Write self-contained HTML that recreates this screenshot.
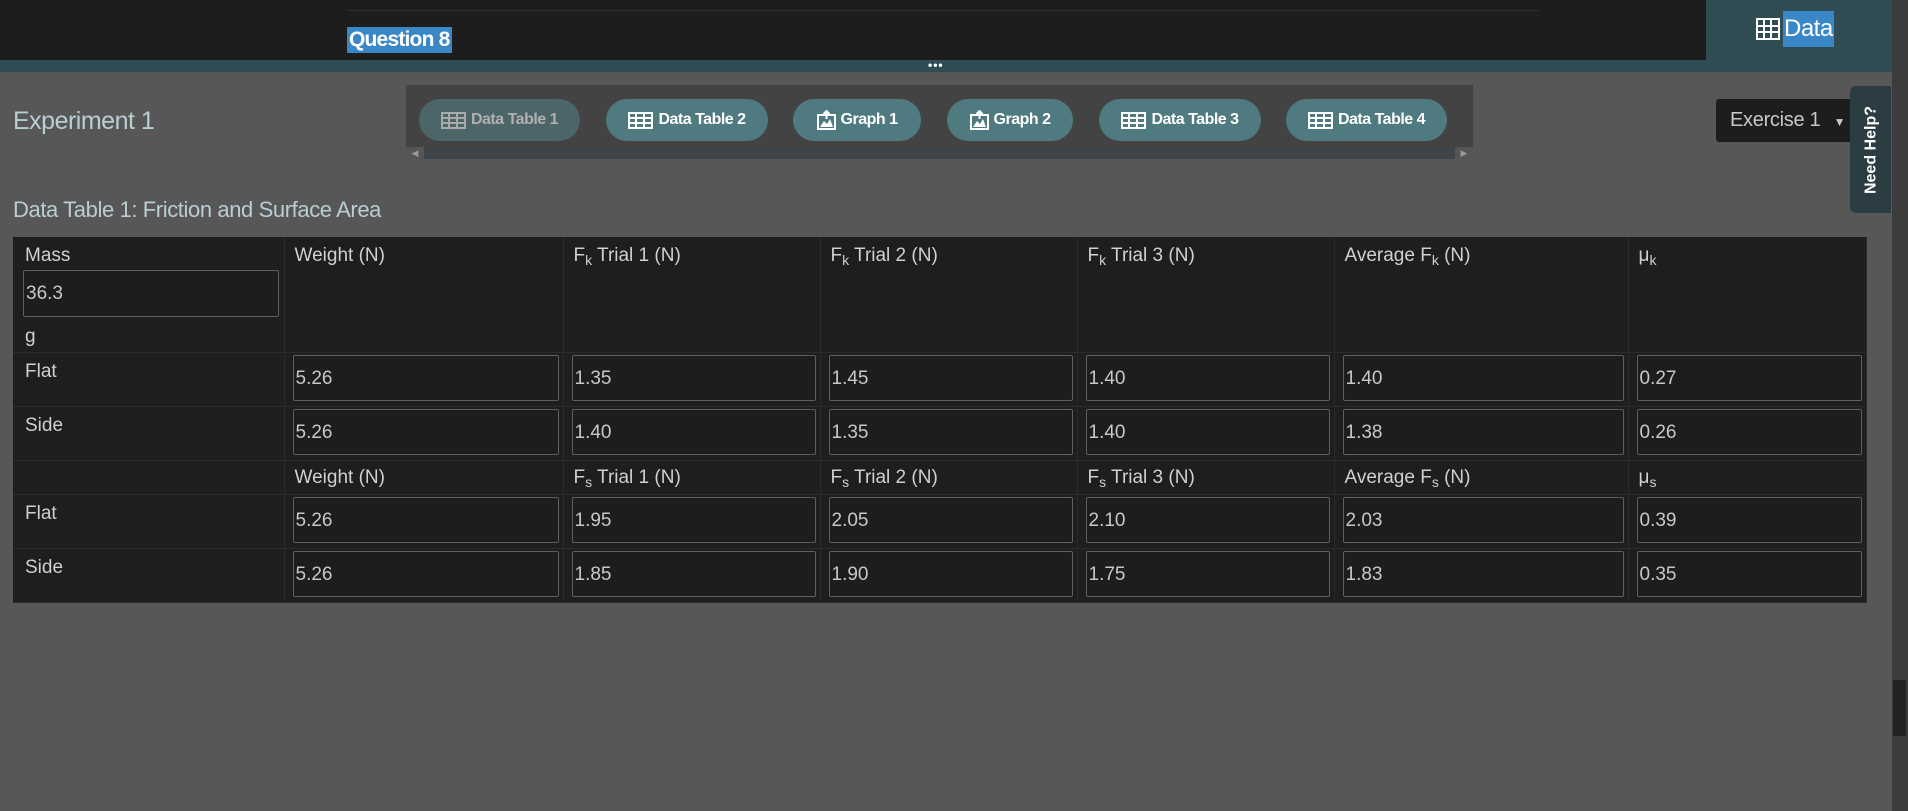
<!DOCTYPE html>
<html><head><meta charset="utf-8"><style>
*{margin:0;padding:0;box-sizing:border-box}
body{width:1908px;height:811px;overflow:hidden;background:#575757;font-family:"Liberation Sans",sans-serif;position:relative}
.abs{position:absolute}
.pill{position:absolute;top:99px;height:42px;border-radius:21px;background:#4e7a80;color:#fff;font-weight:bold;font-size:16px;letter-spacing:-0.5px;display:flex;align-items:center;justify-content:center;gap:5px}
.pill svg{display:block}
table{position:absolute;left:13px;top:237px;width:1853px;border-collapse:collapse;background:#1e1e21;color:#d0d0d0;font-size:19px;table-layout:fixed}
td{vertical-align:top;border-right:1px solid #2a2a2d;border-bottom:1px solid #2c2c2f;padding:8px 10px}
.inp{height:46px;border:1px solid #5e5e5e;border-radius:2px;background:#1d1d1d;color:#c8c8c8;font-size:19px;padding:12px 2px 0;margin-left:0}
td.i{padding:2px 4px 0 8px}
sub{font-size:14px;vertical-align:-4px;line-height:0}
</style></head><body>
<div class="abs" style="left:0;top:0;width:1706px;height:60px;background:#1d1d1d"></div>
<div class="abs" style="left:347px;top:10px;width:1192px;height:1px;background:#2e2e2e"></div>
<div class="abs" style="left:0;top:60px;width:1892px;height:12px;background:#2f4d53"></div>
<div class="abs" style="left:1706px;top:0;width:186px;height:72px;background:#2f4d53"></div>
<div class="abs" style="left:1892px;top:0;width:16px;height:811px;background:#3c3c3c"></div>
<div class="abs" style="left:1893px;top:680px;width:13px;height:56px;background:#222"></div>
<div class="abs" style="left:347px;top:27px;height:26px;background:#3a87c8;color:#fff;font-weight:bold;font-size:21px;letter-spacing:-0.8px;padding:0 2px;line-height:26px">Question 8</div>
<div class="abs" style="left:928px;top:58px;color:#fff;font-size:12px;letter-spacing:1px;font-weight:bold">•••</div>
<div class="abs" style="left:1756px;top:11px;height:36px;display:flex;align-items:center;color:#fff;font-size:24px">
<svg width="24" height="22" viewBox="0 0 24 22" style="margin-right:3px"><rect x="1" y="1" width="22" height="20" fill="none" stroke="#fff" stroke-width="2"/><path d="M1 8H23M1 14H23M8 1V21M15 1V21" stroke="#fff" stroke-width="2"/></svg>
<span style="background:#3a87c8;padding:0 1px;height:36px;line-height:36px;letter-spacing:-0.5px">Data</span></div>

<div class="abs" style="left:13px;top:107px;color:#b9ced2;font-size:25px;letter-spacing:-0.5px">Experiment 1</div>
<div class="abs" style="left:406px;top:85px;width:1067px;height:74px;background:#434343"></div>
<div class="abs" style="left:406px;top:147px;width:1067px;height:12px;background:#3e4447"></div>
<div class="abs" style="left:406px;top:147px;width:18px;height:12px;background:#555;color:#999;font-size:9px;line-height:12px;text-align:center">◀</div>
<div class="abs" style="left:1455px;top:147px;width:18px;height:12px;background:#555;color:#999;font-size:9px;line-height:12px;text-align:center">▶</div>

<div class="pill" style="left:419px;width:161px;background:#4c6569;color:#b0b0b0"><svg width="25" height="17" viewBox="0 0 25 17"><rect x="1" y="1" width="23" height="15" fill="none" stroke="#aaa" stroke-width="2"/><path d="M1 6H24M1 11H24M8 1V16M16 1V16" stroke="#aaa" stroke-width="2"/></svg>Data Table 1</div>
<div class="pill" style="left:606px;width:162px"><svg width="25" height="17" viewBox="0 0 25 17"><rect x="1" y="1" width="23" height="15" fill="none" stroke="#fff" stroke-width="2"/><path d="M1 6H24M1 11H24M8 1V16M16 1V16" stroke="#fff" stroke-width="2"/></svg>Data Table 2</div>
<div class="pill" style="left:793px;width:128px"><svg width="19" height="20" viewBox="0 0 19 20"><rect x="1" y="5" width="17" height="14" fill="none" stroke="#fff" stroke-width="2"/><path d="M3 17L7 11L10 14L13 9L16 17Z" fill="#fff"/><path d="M9.5 1V9M6.5 4L9.5 1L12.5 4" stroke="#fff" stroke-width="2" fill="none"/></svg>Graph 1</div>
<div class="pill" style="left:947px;width:126px"><svg width="19" height="20" viewBox="0 0 19 20"><rect x="1" y="5" width="17" height="14" fill="none" stroke="#fff" stroke-width="2"/><path d="M3 17L7 11L10 14L13 9L16 17Z" fill="#fff"/><path d="M9.5 1V9M6.5 4L9.5 1L12.5 4" stroke="#fff" stroke-width="2" fill="none"/></svg>Graph 2</div>
<div class="pill" style="left:1099px;width:162px"><svg width="25" height="17" viewBox="0 0 25 17"><rect x="1" y="1" width="23" height="15" fill="none" stroke="#fff" stroke-width="2"/><path d="M1 6H24M1 11H24M8 1V16M16 1V16" stroke="#fff" stroke-width="2"/></svg>Data Table 3</div>
<div class="pill" style="left:1286px;width:161px"><svg width="25" height="17" viewBox="0 0 25 17"><rect x="1" y="1" width="23" height="15" fill="none" stroke="#fff" stroke-width="2"/><path d="M1 6H24M1 11H24M8 1V16M16 1V16" stroke="#fff" stroke-width="2"/></svg>Data Table 4</div>

<div class="abs" style="left:1716px;top:99px;width:146px;height:43px;background:#1d1d1f;border-radius:3px;color:#c8c8c8;font-size:20px;line-height:43px;padding-left:14px;letter-spacing:-0.3px">Exercise 1 <span style="font-size:12px;margin-left:8px">▼</span></div>
<div class="abs" style="left:1850px;top:86px;width:41px;height:127px;background:#2b3d42;border-radius:6px 0 0 6px"></div>
<div class="abs" style="left:1808px;top:139px;width:127px;height:22px;transform:rotate(-90deg);color:#fff;font-weight:bold;font-size:16px;text-align:center;line-height:22px">Need Help?</div>

<div class="abs" style="left:13px;top:197px;color:#b9ced2;font-size:22px;letter-spacing:-0.4px">Data Table 1: Friction and Surface Area</div>

<table>
<colgroup><col style="width:271px"><col style="width:279px"><col style="width:257px"><col style="width:257px"><col style="width:257px"><col style="width:294px"><col style="width:238px"></colgroup>
<tr style="height:115px"><td style="padding:8px 12px 0">Mass<div class="inp" style="margin:3px -7px 0 -2px;height:47px">36.3</div><div style="margin-top:9px">g</div></td><td>Weight (N)</td><td>F<sub>k</sub> Trial 1 (N)</td><td>F<sub>k</sub> Trial 2 (N)</td><td>F<sub>k</sub> Trial 3 (N)</td><td>Average F<sub>k</sub> (N)</td><td>μ<sub>k</sub></td></tr>
<tr style="height:54px"><td style="padding:8px 12px">Flat</td><td class="i"><div class="inp">5.26</div></td><td class="i"><div class="inp">1.35</div></td><td class="i"><div class="inp">1.45</div></td><td class="i"><div class="inp">1.40</div></td><td class="i"><div class="inp">1.40</div></td><td class="i"><div class="inp">0.27</div></td></tr>
<tr style="height:54px"><td style="padding:8px 12px">Side</td><td class="i"><div class="inp">5.26</div></td><td class="i"><div class="inp">1.40</div></td><td class="i"><div class="inp">1.35</div></td><td class="i"><div class="inp">1.40</div></td><td class="i"><div class="inp">1.38</div></td><td class="i"><div class="inp">0.26</div></td></tr>
<tr style="height:34px"><td></td><td style="padding:6px 10px 0">Weight (N)</td><td style="padding:6px 10px 0">F<sub>s</sub> Trial 1 (N)</td><td style="padding:6px 10px 0">F<sub>s</sub> Trial 2 (N)</td><td style="padding:6px 10px 0">F<sub>s</sub> Trial 3 (N)</td><td style="padding:6px 10px 0">Average F<sub>s</sub> (N)</td><td style="padding:6px 10px 0">μ<sub>s</sub></td></tr>
<tr style="height:54px"><td style="padding:8px 12px">Flat</td><td class="i"><div class="inp">5.26</div></td><td class="i"><div class="inp">1.95</div></td><td class="i"><div class="inp">2.05</div></td><td class="i"><div class="inp">2.10</div></td><td class="i"><div class="inp">2.03</div></td><td class="i"><div class="inp">0.39</div></td></tr>
<tr style="height:54px"><td style="padding:8px 12px">Side</td><td class="i"><div class="inp">5.26</div></td><td class="i"><div class="inp">1.85</div></td><td class="i"><div class="inp">1.90</div></td><td class="i"><div class="inp">1.75</div></td><td class="i"><div class="inp">1.83</div></td><td class="i"><div class="inp">0.35</div></td></tr>
</table>
</body></html>
